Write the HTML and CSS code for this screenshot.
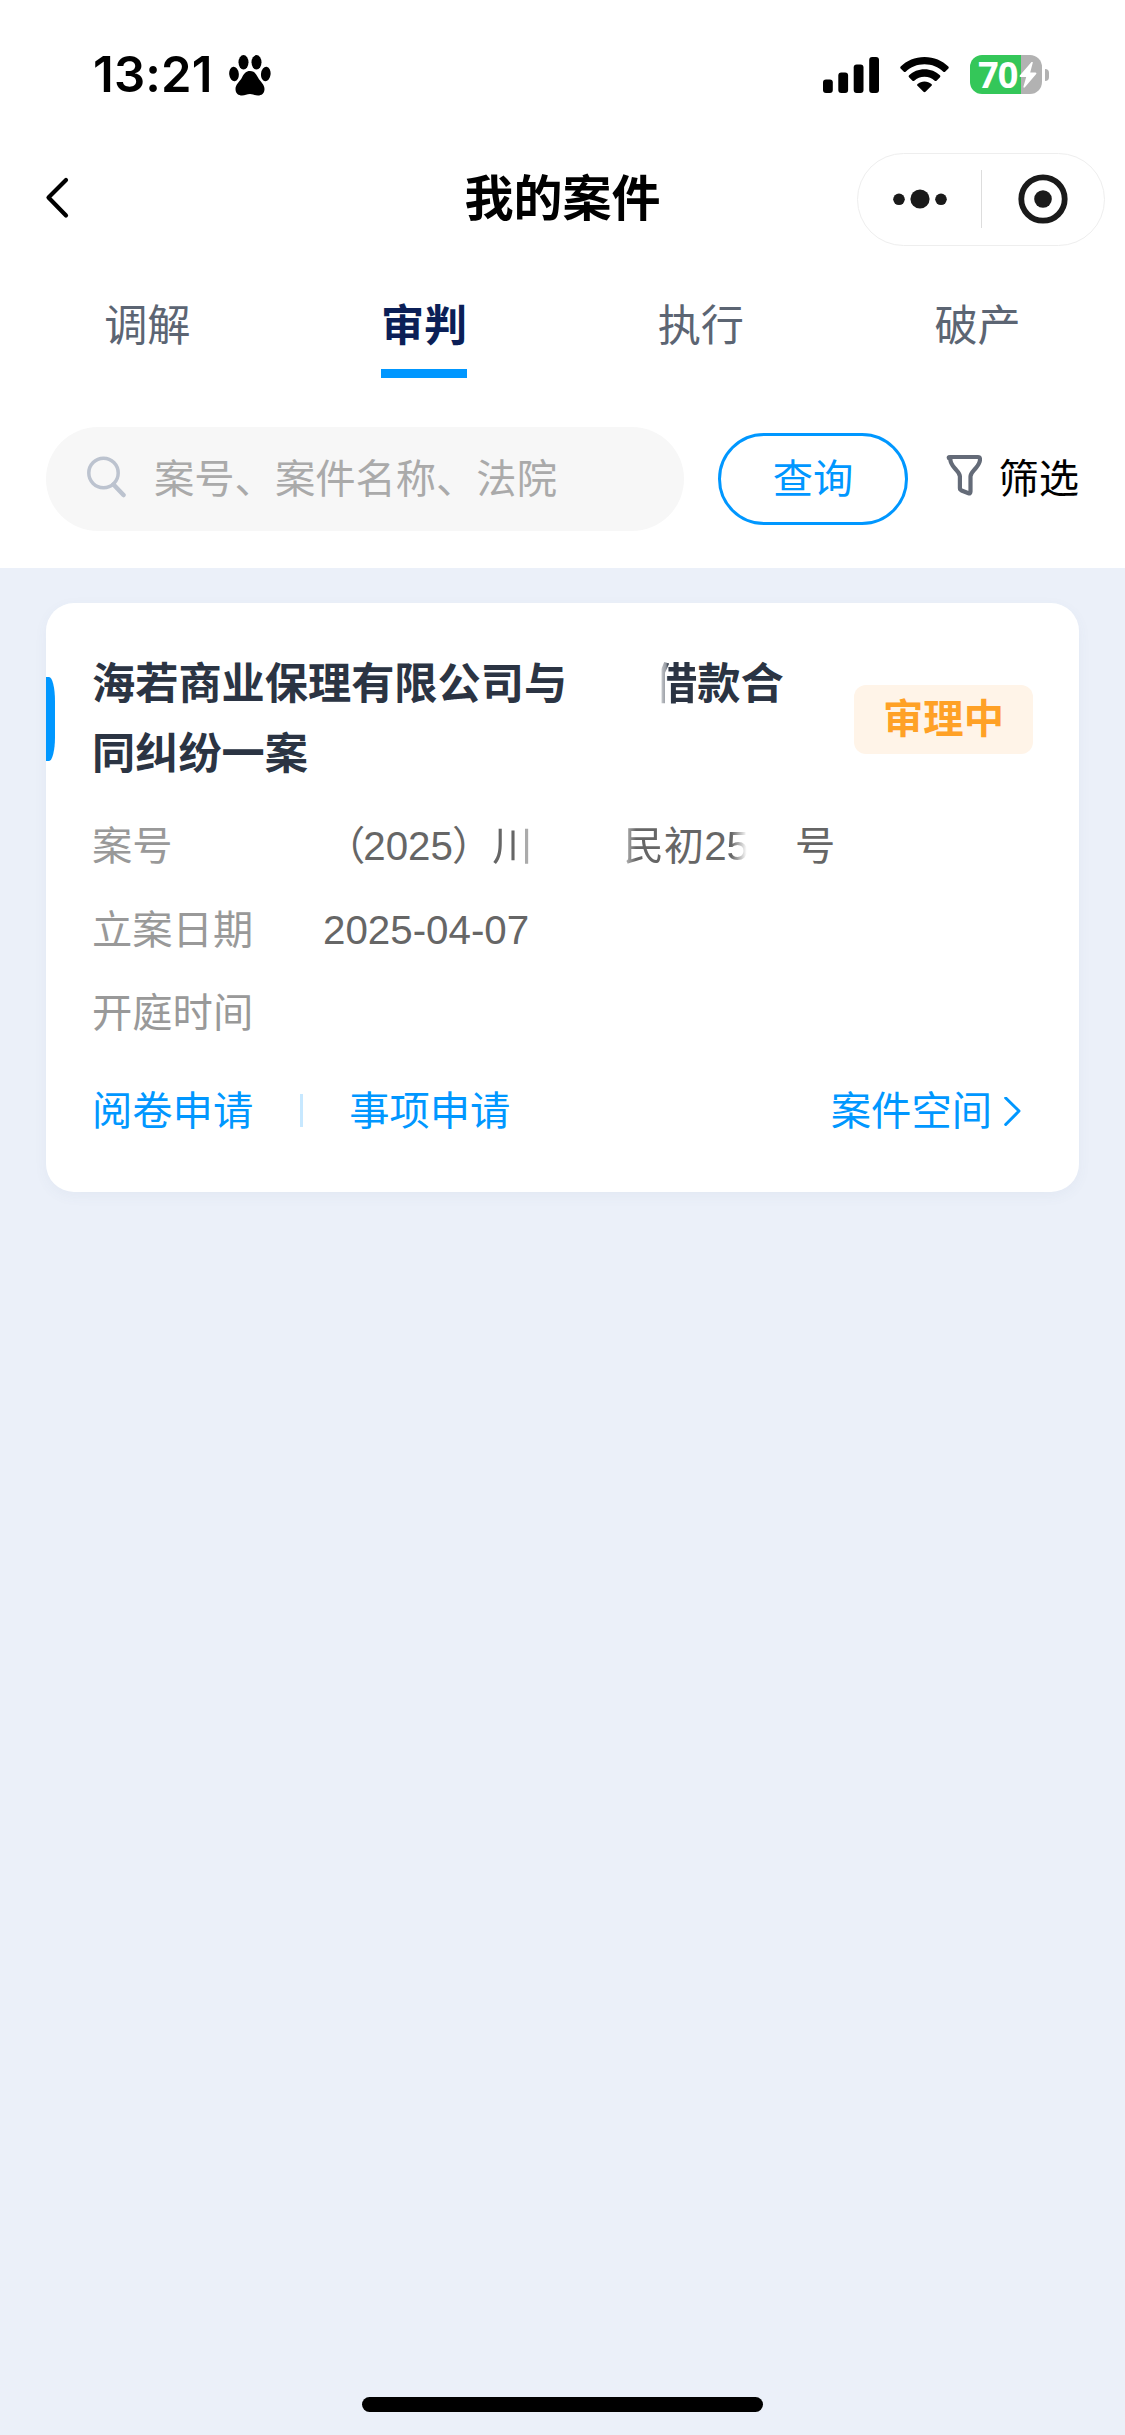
FILE: index.html
```html
<!DOCTYPE html>
<html lang="zh-CN">
<head>
<meta charset="utf-8">
<title>我的案件</title>
<link rel="stylesheet" href="styles.css">
</head>
<body>
<div class="screen">
  <header class="top">
    <div class="status">
      <span class="time">13:21</span>
      <svg class="paw" width="42" height="41" viewBox="0 0 42 41">
        <ellipse cx="5" cy="19" rx="4.8" ry="7.2" transform="rotate(-6 5 19)"/>
        <ellipse cx="14.5" cy="7.3" rx="5" ry="7.2"/>
        <ellipse cx="27.5" cy="7.3" rx="5" ry="7.2"/>
        <ellipse cx="36.8" cy="19" rx="4.8" ry="7.2" transform="rotate(6 36.8 19)"/>
        <path d="M21 16c4 0 6 2.500 8 6.500 2 4 6.500 6.500 6.500 11.500 0 4.500-3 6.500-6.500 6.500-3 0-5-1.500-8-1.500s-5 1.500-8 1.500c-3.500 0-6.500-2-6.500-6.500 0-5 4.500-7.500 6.500-11.500 2-4 4-6.500 8-6.500z"/>
      </svg>
      <svg class="signal" width="56" height="36" viewBox="0 0 56 36">
        <rect x="0" y="22.500" width="9.800" height="13.500" rx="3"/>
        <rect x="15.300" y="15.500" width="9.800" height="20.500" rx="3"/>
        <rect x="30.700" y="7.500" width="9.800" height="28.500" rx="3"/>
        <rect x="46.200" y="0" width="9.800" height="36" rx="3"/>
      </svg>
      <svg class="wifi" width="49" height="36" viewBox="0 0 49 36">
        <path d="M24.500 0C34 0 42.300 3.600 48.300 9.500c.6.600.6 1.300.1 1.900l-3.300 3.300c-.5.500-1.200.5-1.800 0C38.300 9.900 31.800 7.200 24.500 7.200S10.700 9.900 5.700 14.700c-.6.500-1.300.5-1.800 0L.6 11.400C.1 10.800.1 10.100.7 9.500 6.700 3.600 15 0 24.500 0z"/>
        <path d="M24.500 12.300c6.100 0 11.400 2.300 15.400 6 .6.600.6 1.300.1 1.900l-3.500 3.500c-.5.500-1.200.5-1.800 0-2.700-2.500-6.200-4-10.200-4s-7.500 1.500-10.200 4c-.6.500-1.300.5-1.800 0L9 20.200c-.5-.6-.5-1.300.1-1.900 4-3.700 9.300-6 15.400-6z"/>
        <path d="M24.500 24.500c2.700 0 5 .9 6.900 2.400.7.600.7 1.300.1 1.900l-6 6c-.6.600-1.400.6-2 0l-6-6c-.6-.6-.6-1.300.1-1.900 1.900-1.500 4.200-2.400 6.900-2.400z"/>
      </svg>
      <div class="battery">
        <span class="level">70</span>
        <svg class="bolt" width="18" height="26" viewBox="0 0 18 26"><path d="M12.300.2 1 13.200c-.8 1-.4 1.700.7 1.700h5.500L4.500 24.500c-.4 1.200.6 1.700 1.400.8L17 12.300c.8-1 .4-1.700-.7-1.700h-5.100L13.700 1c.4-1.200-.6-1.700-1.400-.8z"/></svg>
      </div>
      <span class="nub"></span>
    </div>
    <nav class="nav">
      <svg class="back" width="24" height="42" viewBox="0 0 24 42"><path d="M21 3 3.500 20.500 21 38.500"/></svg>
      <h1 class="title">我的案件</h1>
      <div class="capsule">
        <svg class="more" width="54" height="20" viewBox="0 0 54 20"><circle cx="6" cy="10.300" r="5.800"/><circle cx="27" cy="10" r="9.600"/><circle cx="48" cy="10.300" r="5.800"/></svg>
        <span class="split"></span>
        <svg class="target" width="50" height="50" viewBox="0 0 50 50"><circle class="ring" cx="25" cy="25" r="21.700"/><circle cx="25" cy="25" r="8.800"/></svg>
      </div>
    </nav>
    <div class="tabs">
      <a class="tab">调解</a>
      <a class="tab active">审判</a>
      <a class="tab">执行</a>
      <a class="tab">破产</a>
    </div>
    <div class="searchbar">
      <div class="search">
        <svg class="glass" width="40" height="42" viewBox="0 0 40 42"><circle cx="16.500" cy="17" r="14.700"/><path class="handle" d="m26.500 28.500 10 10.500"/></svg>
        <span>案号、案件名称、法院</span>
      </div>
      <button class="query">查询</button>
      <svg class="funnel" width="36" height="42" viewBox="0 0 36 42"><path d="M4 3h28c1.600 0 2 1 2 2.500 0 4-2.500 6.500-5 9.500-2.500 2.800-4.500 4.500-4.500 7.500v15c0 1.500-.8 2.200-2 1.800l-7-2.800c-1.200-.5-1.600-1.200-1.600-2.400V22.500c0-3-2-4.700-4.500-7.500-2.500-3-5-5.500-5-9.500C2 4 2.400 3 4 3z"/></svg>
      <span class="filter">筛选</span>
    </div>
  </header>
  <main class="content">
    <article class="card">
      <div class="head">
        <span class="marker"></span>
        <h2 class="name">海若商业保理有限公司与<span class="gap"></span><span class="fade-in">借</span>款合<br>同纠纷一案</h2>
        <span class="tag">审理中</span>
      </div>
      <dl class="info">
        <div class="row"><dt>案号</dt><dd><span class="open">（</span>2025<span class="close">）</span><span class="fade-third">川</span><span class="gap-court"></span><span class="fade-left">民</span>初2<span class="fade-out">5</span><span class="gap-number"></span>号</dd></div>
        <div class="row"><dt>立案日期</dt><dd>2025-04-07</dd></div>
        <div class="row"><dt>开庭时间</dt><dd></dd></div>
      </dl>
      <div class="links">
        <a>阅卷申请</a>
        <span class="bar"></span>
        <a>事项申请</a>
        <a class="space">案件空间<svg width="17" height="30" viewBox="0 0 17 30"><path d="M1.700 1 15 14 1.700 27.500"/></svg></a>
      </div>
    </article>
  </main>
  <div class="home"></div>
</div>
</body>
</html>
```
FILE: styles.css
```css
* { box-sizing: border-box; }
body, h1, h2, dl, dd { margin: 0; }
body { background: #ebf0f9; font-family: "Liberation Sans", "Noto Sans CJK SC", sans-serif; font-size: 40.3px; color: #000; }
svg { display: block; flex: none; }
.screen { width: 1125px; height: 2435px; display: flex; flex-direction: column; }
.top { height: 568px; background: #fff; flex: none; }

.status { display: flex; height: 152px; padding: 55px 0 0 93px; align-items: flex-start; }
.time { font: 600 49px/40px Inter, sans-serif; width: 136px; letter-spacing: .2px; white-space: nowrap; }
.signal { margin: 2px 21px 0 552px; }
.wifi { margin: 2px 21px 0 0; }
.battery { width: 72px; height: 39px; border-radius: 12px; background: linear-gradient(90deg, #34c759 51px, #b2b2b2 51px); display: flex; align-items: center; padding-left: 8px; }
.level { font: 700 36px/38px "Open Sans", sans-serif; color: #fff; width: 41px; letter-spacing: -.8px; }
.bolt { fill: #fff; }
.nub { width: 4px; height: 12px; margin: 14px 0 0 3px; background: #b2b2b2; border-radius: 0 6px 6px 0; }

.nav { height: 94px; display: grid; grid-template-columns: 268px 1fr 268px; align-items: center; }
.back { margin: 0 0 2px 45px; fill: none; stroke: #000; stroke-width: 4.200; stroke-linecap: round; stroke-linejoin: round; }
.title { font-size: 49px; line-height: 60px; font-weight: 700; text-align: center; }
.capsule { width: 248px; height: 93px; border: 1.500px solid #eee; border-radius: 47px; display: flex; align-items: center; fill: #1a1a1a; }
.more { margin-left: 35px; }
.split { width: 1px; height: 58px; background: #ddd; margin-left: 34px; }
.target { margin-left: 36px; }
.ring { fill: none; stroke: #1a1a1a; stroke-width: 5.800; }

.tabs { display: grid; grid-template-columns: repeat(4, 1fr); padding: 51px 9px 0; justify-items: center; }
.tab { height: 81px; line-height: 59px; font-size: 43.200px; color: #5c6573; }
.active { color: #0b1f57; font-weight: 700; border-bottom: 9px solid #0097ff; }

.searchbar { display: flex; align-items: center; padding: 49px 46px 0; }
.search { width: 638px; height: 104px; border-radius: 52px; background: #f7f7f7; color: #aaa; display: flex; align-items: center; padding-left: 41px; }
.search span { margin-left: 27px; line-height: 60px; padding-top: 2px; }
.glass { fill: none; stroke: #bcc3cf; stroke-width: 3.500; margin-bottom: 4px; }
.handle { stroke-width: 4.500; stroke-linecap: round; }
.query { width: 191px; height: 92px; margin-left: 34px; padding: 2px 0 0; border: 3px solid #0097ff; border-radius: 46px; background: #fff; color: #0097ff; font: inherit; line-height: 60px; }
.funnel { margin: 0 0 8px 38px; fill: none; stroke: #646b78; stroke-width: 4.200; }
.filter { margin-left: 16px; line-height: 60px; padding-top: 2px; white-space: nowrap; }

.content { flex: 1; padding: 35px 46px 0; }
.card { height: 589px; background: #fff; border-radius: 28px; padding-top: 46px; box-shadow: 0 4px 14px rgba(70, 90, 130, .05); }
.head { display: flex; align-items: center; height: 140px; padding-right: 46px; }
.marker { width: 9px; height: 84px; background: #0097ff; border-radius: 0 6px 6px 0 / 0 24px 24px 0; }
.name { margin-left: 37px; padding-top: 1px; flex: 1; font-size: 43.200px; line-height: 69.700px; font-weight: 700; color: #2b3443; white-space: nowrap; }
.gap { display: inline-block; width: 87px; }
.fade-in { -webkit-mask-image: linear-gradient(90deg, transparent 16%, rgba(0,0,0,.35) 20%, rgba(0,0,0,.5) 28%, #000 33%); mask-image: linear-gradient(90deg, transparent 16%, rgba(0,0,0,.35) 20%, rgba(0,0,0,.5) 28%, #000 33%); }
.tag { width: 179px; height: 69px; line-height: 70px; border-radius: 12px; background: #fff4e8; color: #ffa126; font-weight: 700; text-align: center; }

.info { margin: 16px 0 0; padding-left: 46px; }
.row { display: flex; height: 83.600px; line-height: 83.600px; white-space: nowrap; }
.row dt { width: 231px; color: #999; }
.row dd { color: #666; }
.open { margin: 0 -2px 0 2px; }
.close { margin: 0 1px 0 -1px; }
.gap-court { display: inline-block; width: 90px; }
.gap-number { display: inline-block; width: 46px; }
.fade-third { margin-left: -1px; -webkit-mask-image: linear-gradient(90deg, #000 70%, rgba(0,0,0,.55) 80%); mask-image: linear-gradient(90deg, #000 70%, rgba(0,0,0,.55) 80%); }
.fade-left { margin-left: 1px; -webkit-mask-image: linear-gradient(90deg, rgba(0,0,0,.6) 10%, #000 30%); mask-image: linear-gradient(90deg, rgba(0,0,0,.6) 10%, #000 30%); }
.fade-out { -webkit-mask-image: linear-gradient(90deg, #000 20%, transparent 90%); mask-image: linear-gradient(90deg, #000 20%, transparent 90%); }

.links { display: flex; align-items: center; margin-top: 26px; padding: 0 58px 0 46px; line-height: 60px; color: #0097ff; }
.bar { width: 3px; height: 33px; background: #c7e8ff; margin: 0 46px 3px 47px; }
.space { margin-left: auto; display: flex; align-items: center; gap: 12px; }
.space svg { fill: none; stroke: #0097ff; stroke-width: 3; stroke-linecap: round; stroke-linejoin: round; }

.home { width: 401px; height: 15px; border-radius: 8px; background: #000; margin: 0 auto 23px; }
```
